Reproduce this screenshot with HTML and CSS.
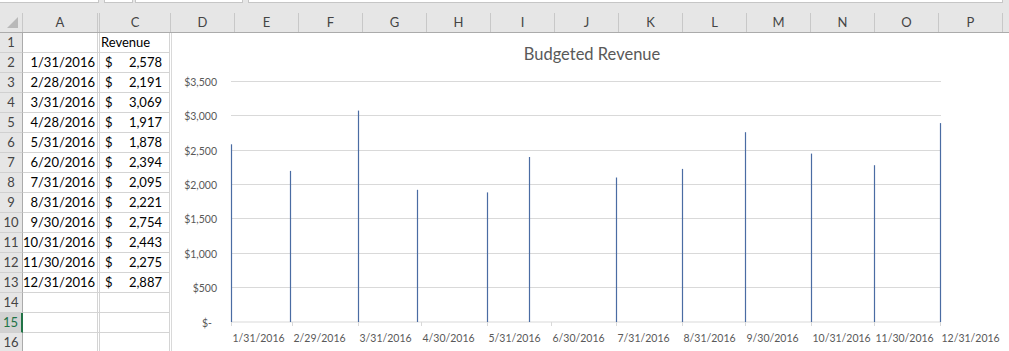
FILE: index.html
```html
<!DOCTYPE html>
<html lang="en">
<head>
<meta charset="UTF-8" />
  <meta name="viewport" content="width=device-width, initial-scale=1.0"/>
  <title>Budgeted Revenue</title>
  <link rel="stylesheet" href="styles.css">
</head>
<body>
  <div class="top">
    <div class="tabs">
      <span class="tab t1"></span>
      <span class="tab t2"></span>
      <span class="tab t3"></span>
      <span class="tab t4"></span>
    </div>
  </div>

  <div class="colheads">
    <div class="corner"><span class="tri"></span></div>
    <div class="ch wa">A</div>
    <div class="ch wb"></div>
    <div class="ch wc">C</div>
    <div class="ch">D</div>
    <div class="ch">E</div>
    <div class="ch">F</div>
    <div class="ch">G</div>
    <div class="ch">H</div>
    <div class="ch">I</div>
    <div class="ch">J</div>
    <div class="ch">K</div>
    <div class="ch">L</div>
    <div class="ch">M</div>
    <div class="ch">N</div>
    <div class="ch">O</div>
    <div class="ch">P</div>
    <div class="ch"></div>
  </div>

  <div class="sheet">
    <div class="cells" id="cells">
      <!-- rows built by script below -->
    </div>

    <div class="chart">
      <svg width="837" height="318" viewBox="172 33 837 318" xmlns="http://www.w3.org/2000/svg">
        <text class="title" x="592" y="60" text-anchor="middle">Budgeted Revenue</text>
        <g id="grid"></g>
        <g id="bars"></g>
        <g id="xlabels"></g>
      </svg>
    </div>
  </div>

  <script>
    const rows = [
      ['1/31/2016', 2578, 0],
      ['2/28/2016', 2191, 28],
      ['3/31/2016', 3069, 60],
      ['4/28/2016', 1917, 88],
      ['5/31/2016', 1878, 121],
      ['6/20/2016', 2394, 141],
      ['7/31/2016', 2095, 182],
      ['8/31/2016', 2221, 213],
      ['9/30/2016', 2754, 243],
      ['10/31/2016', 2443, 274],
      ['11/30/2016', 2275, 304],
      ['12/31/2016', 2887, 335]
    ];
    const months = [
      ['1/31/2016', 0], ['2/29/2016', 29], ['3/31/2016', 60], ['4/30/2016', 90],
      ['5/31/2016', 121], ['6/30/2016', 151], ['7/31/2016', 182], ['8/31/2016', 213],
      ['9/30/2016', 243], ['10/31/2016', 274], ['11/30/2016', 304], ['12/31/2016', 335]
    ];

    const fmt = n => n.toLocaleString('en-US');

    // spreadsheet cells
    let html = '';
    for (let r = 1; r <= 16; r++) {
      const sel = r === 15 ? ' sel' : '';
      html += `<div class="rh${sel}">${r}</div>`;
      if (r === 1) {
        html += `<div class="cell"></div><div class="cell"></div><div class="cell txt">Revenue</div>`;
      } else if (rows[r - 2]) {
        const d = rows[r - 2];
        html += `<div class="cell date">${d[0]}</div><div class="cell"></div>
                 <div class="cell money"><span>$</span><span>${fmt(d[1])}</span></div>`;
      } else {
        html += `<div class="cell"></div><div class="cell"></div><div class="cell"></div>`;
      }
    }
    document.getElementById('cells').innerHTML = html;

    // chart
    const x0 = 231.5, perDay = 709 / 335, y0 = 321.5, perUnit = 34.36 / 500;

    let grid = '';
    for (let k = 1; k <= 7; k++) {
      const y = Math.round(y0 - k * 500 * perUnit) + 0.5;
      grid += `<line class="gl" x1="231" x2="941" y1="${y}" y2="${y}"/>`;
      grid += `<text class="yl" x="217" y="${y + 4}" text-anchor="end">$${fmt(k * 500)}</text>`;
    }
    grid += `<line class="gl" x1="231" x2="941" y1="${y0 + 0.5}" y2="${y0 + 0.5}"/>`;
    grid += `<text class="yl" x="212" y="${y0 + 5}" text-anchor="end">$-</text>`;
    document.getElementById('grid').innerHTML = grid;

    let bars = '';
    rows.forEach(d => {
      const x = Math.floor(x0 + d[2] * perDay) + 0.5;
      const top = y0 - d[1] * perUnit;
      bars += `<line class="bar" x1="${x}" x2="${x}" y1="${top.toFixed(1)}" y2="${y0 + 0.5}"/>`;
    });
    document.getElementById('bars').innerHTML = bars;

    let xl = '';
    months.forEach(m => {
      const x = Math.floor(x0 + m[1] * perDay) + 0.5;
      xl += `<line class="gl" x1="${x}" x2="${x}" y1="322" y2="326"/>`;
      xl += `<text class="xl" x="${x + 1}" y="342">${m[0]}</text>`;
    });
    document.getElementById('xlabels').innerHTML = xl;
  </script>
</body>
</html>
```

FILE: styles.css
```css
* {
  box-sizing: border-box;
}
body {
  margin: 0;
  width: 1009px;
  height: 351px;
  overflow: hidden;
  background: #fff;
  font-family: Lato, 'Liberation Sans', sans-serif;
}
.top {
  height: 13px;
  background: #e6e6e6;
}
.tabs {
  display: flex;
  height: 3px;
}
.tab {
  background: #fff;
  border-bottom: 1px solid #c6c6c6;
  border-left: 1px solid #c6c6c6;
  border-right: 1px solid #c6c6c6;
}
.t1 { width: 99px; border-left: none; }
.t2 { width: 29px; margin-left: 5px; }
.t3 { width: 108px; margin-left: 2px; }
.t4 { width: 755px; margin-left: 5px; }

.colheads {
  display: flex;
  height: 20px;
  background: #e6e6e6;
  border-bottom: 1px solid #ababab;
  overflow: hidden;
}
.corner {
  position: relative;
  flex: 0 0 23px;
  border-right: 1px solid #c8c8c8;
}
.tri {
  position: absolute;
  right: 4px;
  bottom: 4px;
  width: 0;
  height: 0;
  border-left: 11px solid transparent;
  border-bottom: 11px solid #b9b9b9;
}
.ch {
  flex: 0 0 64px;
  border-right: 1px solid #c8c8c8;
  color: #444;
  font-size: 13px;
  line-height: 19px;
  text-align: center;
}
.ch.wa { flex-basis: 75px; }
.ch.wb { flex-basis: 2px; }
.ch.wc { flex-basis: 71px; }

.sheet {
  display: flex;
  height: 318px;
}
.cells {
  display: grid;
  grid-template-columns: 23px 75px 2px 70px;
  grid-auto-rows: 20px;
  align-content: start;
}
.rh {
  background: #e6e6e6;
  border-right: 1px solid #ababab;
  border-bottom: 1px solid #d0d0d0;
  color: #444;
  font-size: 13px;
  line-height: 19px;
  text-align: center;
}
.rh.sel {
  background: #d2d2d2;
  color: #217346;
  border-right: 2px solid #217346;
}
.cell {
  border-right: 1px solid #d4d4d4;
  border-bottom: 1px solid #d4d4d4;
  font-size: 13px;
  line-height: 19px;
  color: #000;
  white-space: nowrap;
}
.cell.txt {
  padding-left: 1px;
}
.cell.date {
  text-align: right;
  padding-right: 2px;
}
.cell.money {
  display: flex;
  justify-content: space-between;
  padding: 0 7px 0 5px;
}

.chart {
  margin-left: 1px;
  border-left: 1px solid #d9d9d9;
  flex: 1;
}
.chart svg {
  display: block;
}
.title {
  font-family: Lato, 'Liberation Sans', sans-serif;
  font-size: 16.5px;
  fill: #595959;
}
.gl {
  stroke: #d9d9d9;
  stroke-width: 1;
}
.bar {
  stroke: #4a6ca3;
  stroke-width: 1.2;
}
.yl, .xl {
  font-family: Lato, 'Liberation Sans', sans-serif;
  font-size: 10.5px;
  fill: #595959;
}
```
